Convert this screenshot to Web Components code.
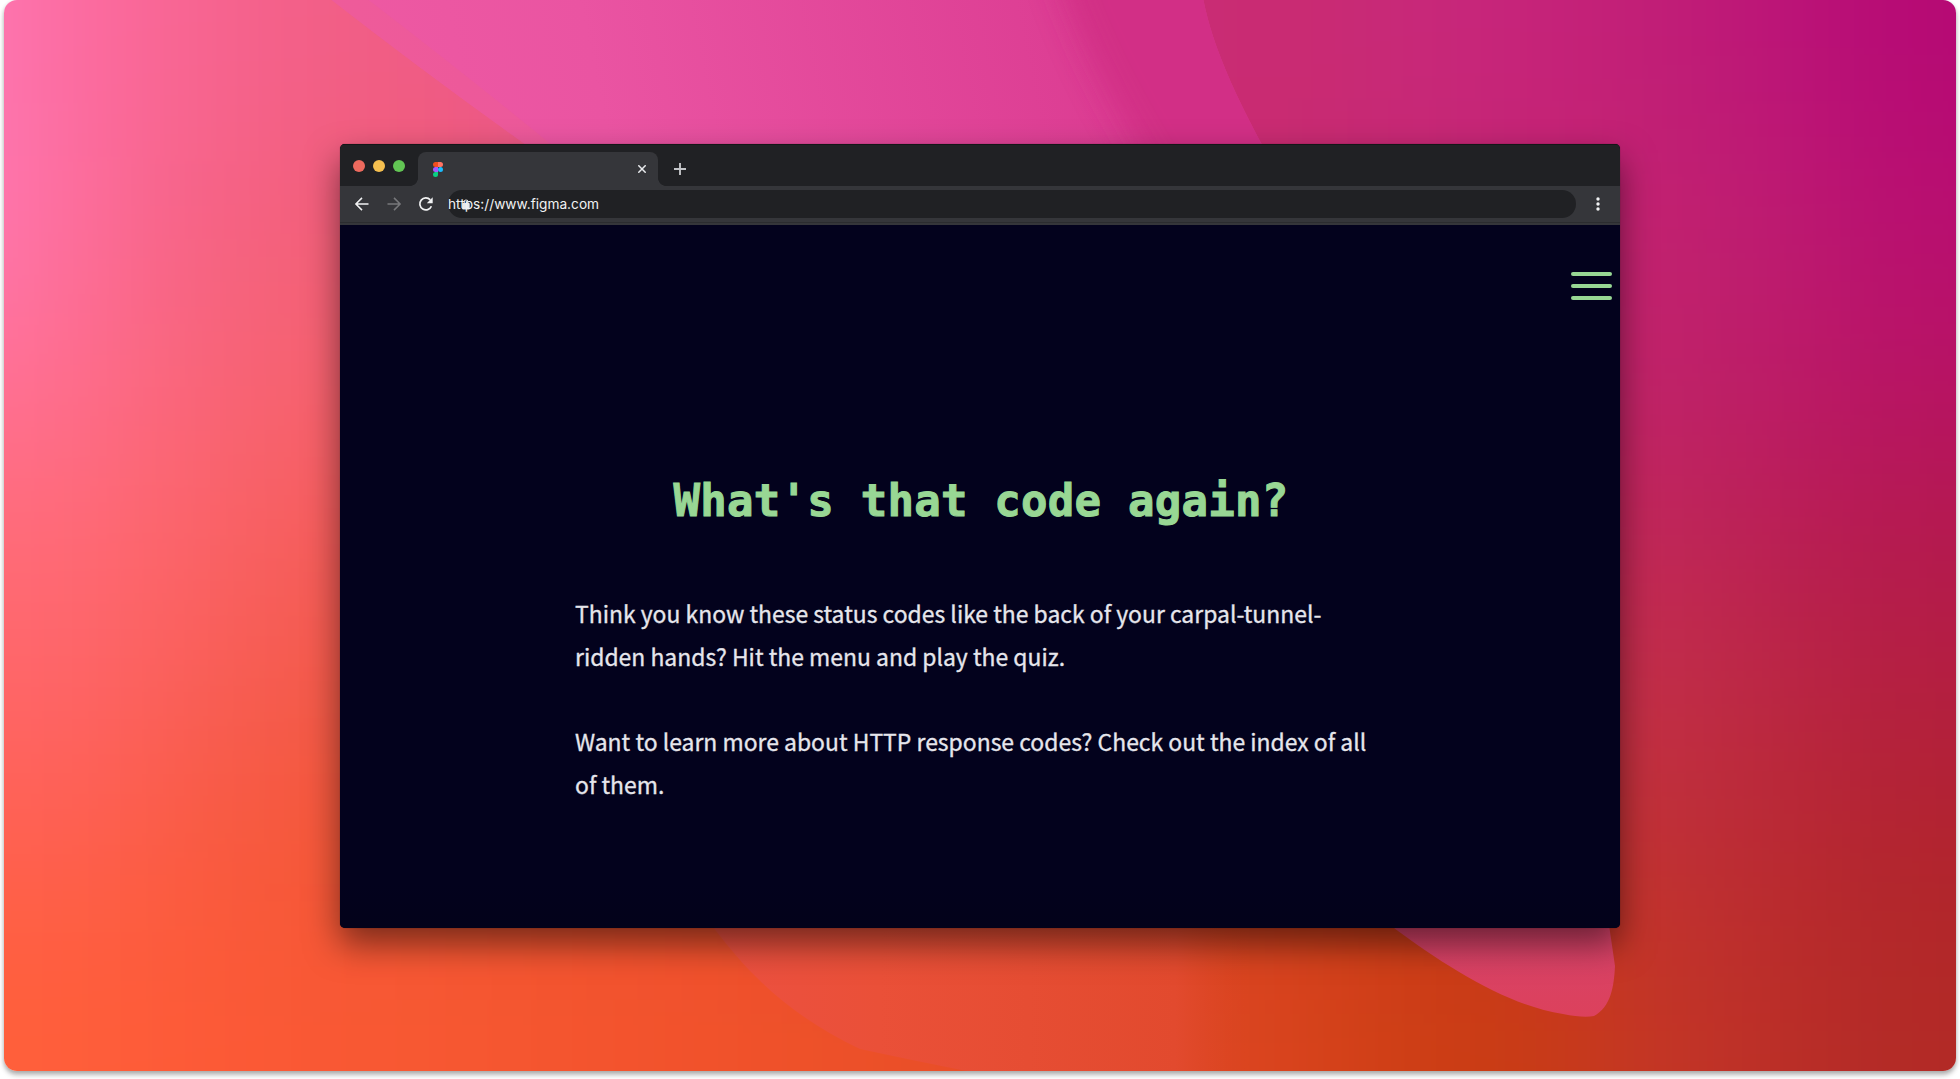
<!DOCTYPE html>
<html lang="en">
<head>
<meta charset="utf-8">
<title>What's that code again?</title>
<style>
html,body{margin:0;background:#fff;height:1079px;overflow:hidden}
</style>
</head>
<body>
<desktop-stage>
  <browser-window url="https://www.figma.com">
    <quiz-landing>
      <span slot="title">What's that code again?</span>
      <p>Think you know these status codes like the back of your carpal-tunnel-<br>ridden hands? Hit the menu and play the quiz.</p>
      <p>Want to learn more about HTTP response codes? Check out the index of all<br>of them.</p>
    </quiz-landing>
  </browser-window>
</desktop-stage>
<script>
const define = (name, html, setup) => customElements.define(name, class extends HTMLElement {
  connectedCallback() {
    if (this.shadowRoot) return;
    const t = document.createElement('template');
    t.innerHTML = html;
    this.attachShadow({mode: 'open'}).append(t.content.cloneNode(true));
    if (setup) setup(this, this.shadowRoot);
  }
});

/* Wallpaper: a softly blended colour grid with translucent petals over it. */
const mesh = [
 'fc6ca3 f86592 f25f87 f05c85 ea5590 e65090 e04a90 d84088 d03880 c82c76 c92b70 c8297a c6237a c11f76 bc1578 b60a74',
 'fe6f9f f66385 f2607a f05a70 e85a80 e05080 d84080 d04080 c82c70 c82c70 c82a70 c52770 c42470 c2226f be1c70 b90f70',
 'ff6e90 f9657a f76270 f06068 e85860 e05060 d84060 d04060 c82c60 c82c60 c82a60 c52760 c42468 bf2369 bc1b68 b71364',
 'ff6b78 fc6468 f65d5d f05850 e85050 e05050 d84050 d04050 c82c50 c82c50 c82a50 c52750 c42455 c02858 ba1f54 b41a4e',
 'ff6568 fa5e58 f35a4a f05840 e85040 e05040 d84040 d04040 c82c40 c82c40 c82a40 c52740 c4304a c32f48 bb2743 b41f40',
 'ff6050 fa5b42 f45738 f25535 f05230 ee5030 e84c30 e04828 da4424 d84422 d04020 c83a18 c63528 bf3038 b92932 b1242e',
 'ff5f3a fd5a37 f95834 f75832 f4552f f2522c ee5129 ea4f28 e54c28 df4824 d9431d cd3e15 c83b14 c43626 bb2e28 b22a26'
].map(r => r.split(' '));

define('mesh-wallpaper', `
<style>:host{display:block;width:100%;height:100%}svg{display:block}</style>
<svg width="1952" height="1071" viewBox="4 0 1952 1071">
  <defs>
    <filter id="soft" x="-20%" y="-20%" width="140%" height="140%" color-interpolation-filters="sRGB"><feGaussianBlur stdDeviation="66 80"/></filter>
    <filter id="edge" x="-30%" y="-30%" width="160%" height="160%"><feGaussianBlur stdDeviation="16"/></filter>
    <linearGradient id="band" gradientUnits="userSpaceOnUse" x1="340" y1="150" x2="1080" y2="0">
      <stop offset="0" stop-color="#ee5aa2"/><stop offset=".35" stop-color="#ea54a2"/><stop offset="1" stop-color="#dc3d93"/>
    </linearGradient>
    <linearGradient id="low" gradientUnits="userSpaceOnUse" x1="720" y1="0" x2="1250" y2="0">
      <stop offset="0" stop-color="#ec5040"/><stop offset=".3" stop-color="#ea5038"/><stop offset=".86" stop-color="#e24a2e"/><stop offset="1" stop-color="#da4422" stop-opacity="0"/>
    </linearGradient>
    <linearGradient id="petal" gradientUnits="userSpaceOnUse" x1="0" y1="928" x2="0" y2="1016">
      <stop offset="0" stop-color="#d7426a"/><stop offset="1" stop-color="#dc415c"/>
    </linearGradient>
  </defs>
  <g id="cells" filter="url(#soft)"></g>
  <path d="M329-2 Q425 73 533 150 L1265 150 C1235 95 1212 45 1203-2Z" fill="url(#band)"/>
  <path d="M329-2 Q425 73 533 150 L558 150 Q460 70 366-2Z" fill="#f2627f" opacity=".22"/>
  <clipPath id="top"><path d="M327-2 L530 150 L1265 150 C1235 95 1212 45 1203-2Z"/></clipPath>
  <g clip-path="url(#top)"><path d="M1052-40 Q1085 70 1170 200 L1330 200 V-40Z" fill="#cd2c80" opacity=".7" filter="url(#edge)"/></g>
  <path d="M708 920 C755 985 800 1020 860 1049 Q920 1062 992 1076 L1260 1076 V920Z" fill="url(#low)"/>
  <path d="M1390 925 C1450 970 1510 1006 1563 1014 Q1583 1018 1594 1016 C1611 1007 1614 986 1615 966 L1609 925Z" fill="url(#petal)"/>
</svg>`, (host, root) => {
  const g = root.getElementById('cells'), W = 122.5, H = 154;
  for (let r = -1; r <= 7; r++) for (let c = -1; c <= 16; c++) {
    const e = document.createElementNS('http://www.w3.org/2000/svg', 'rect');
    const col = (c < 0 && r < 2) ? 'ff7cb8' : (c < 0 && r < 3) ? 'ff7298' : mesh[Math.min(6, Math.max(0, r))][Math.min(15, Math.max(0, c))];
    e.setAttribute('x', c * W - (c < 0 ? 180 : 0)); e.setAttribute('y', r * H - (r < 0 ? 180 : 0));
    e.setAttribute('width', W + 1 + (c < 0 || c > 15 ? 180 : 0)); e.setAttribute('height', H + 1 + (r < 0 || r > 6 ? 180 : 0));
    e.setAttribute('fill', '#' + col);
    g.append(e);
  }
});

define('desktop-stage', `
<style>
:host{display:block;padding:0 4px;height:1079px;box-sizing:border-box}
.card{display:grid;width:1952px;height:1071px;border-radius:13px;box-shadow:0 4px 5px rgba(0,0,0,.27),0 1px 4px rgba(0,0,0,.12)}
.card>*{grid-area:1/1}
mesh-wallpaper{border-radius:13px;overflow:hidden}
.front{z-index:1;display:flex;justify-content:center;align-items:flex-start;padding-top:144px}
</style>
<div class="card"><mesh-wallpaper></mesh-wallpaper><div class="front"><slot></slot></div></div>`);

define('traffic-lights', `
<style>:host{display:flex;gap:8px}i{width:12px;height:12px;border-radius:50%}</style>
<i style="background:#ed6a5e"></i><i style="background:#f5bf4f"></i><i style="background:#62c554"></i>`);

define('browser-tab', `
<style>
:host{display:flex;align-items:flex-end}
.foot{width:8px;height:8px}
.l{background:radial-gradient(circle at 0 0,transparent 7.6px,#35363a 8.2px)}
.r{background:radial-gradient(circle at 100% 0,transparent 7.6px,#35363a 8.2px)}
.tab{box-sizing:border-box;width:240px;height:34px;background:#35363a;border-radius:8px 8px 0 0;display:flex;justify-content:space-between;align-items:center;padding:0 12px 0 15px}
svg{display:block}
</style>
<div class="foot l"></div>
<div class="tab">
  <svg width="10" height="15" viewBox="0 0 10 15"><path d="M2.5 0H5v5H2.5a2.5 2.5 0 0 1 0-5" fill="#f24e1e"/><path d="M5 0h2.5a2.5 2.5 0 0 1 0 5H5" fill="#ff7262"/><path d="M2.5 5H5v5H2.5a2.5 2.5 0 0 1 0-5" fill="#a259ff"/><circle cx="7.5" cy="7.5" r="2.5" fill="#1abcfe"/><path d="M2.5 10H5v2.5A2.5 2.5 0 1 1 2.5 10" fill="#0acf83"/></svg>
  <svg width="8" height="8" viewBox="0 0 8 8"><path d="M.3.3 7.7 7.7M7.7.3.3 7.7" stroke="#e8eaed" stroke-width="1.5"/></svg>
</div>
<div class="foot r"></div>`);

define('browser-toolbar', `
<style>
:host{display:flex;height:39px;box-sizing:border-box;background:linear-gradient(#35363a 36px,#2b2c2f 36px,#2b2c2f 37px,#35363a 37px);align-items:flex-start;padding:4px 14px 0}
.nav,.more{display:flex;height:28px;align-items:center}
.nav{gap:16px;width:94px}
.bar{width:1128px;height:28px;border-radius:14px;background:#202124;display:grid;align-items:center;color:#f1f2f3;font:13.7px/28px Inter,"Liberation Sans",sans-serif}
.bar>*{grid-area:1/1}
.lock{margin-left:14px}
.more{margin-left:20px}
svg{display:block}
</style>
<div class="nav">
 <svg width="16" height="16" viewBox="0 0 16 16" fill="none" stroke="#f1f2f3" stroke-width="1.5"><path d="M14.5 8H2.4M8 1.9 1.9 8 8 14.1"/></svg>
 <svg width="16" height="16" viewBox="0 0 16 16" fill="none" stroke="#77787b" stroke-width="1.5"><path d="M1.5 8H13.6M8 1.9 14.1 8 8 14.1"/></svg>
 <svg width="16" height="16" viewBox="0 0 16 16"><path d="M13.4 10.2A6 6 0 1 1 12.3 3.9" fill="none" stroke="#f1f2f3" stroke-width="1.7"/><path d="M14.7 1.3V7.2H8.8Z" fill="#f1f2f3"/></svg>
</div>
<div class="bar">
 <svg class="lock" width="8" height="11" viewBox="0 0 8 11"><rect x=".3" y="4" width="7.4" height="6.6" rx=".8" fill="#e8e9eb"/><path d="M2.2 4.5V2.8a1.8 1.8 0 0 1 3.600 0v1.700" fill="none" stroke="#e8e9eb" stroke-width="1.1"/></svg>
 <span id="url"></span>
</div>
<div class="more"><svg width="4" height="14" viewBox="0 0 4 14" fill="#f1f2f3"><circle cx="2" cy="2" r="1.7"/><circle cx="2" cy="7" r="1.7"/><circle cx="2" cy="12" r="1.7"/></svg></div>`,
(host, root) => { root.getElementById('url').textContent = host.getAttribute('url'); });

define('browser-window', `
<style>
:host{display:flex;flex-direction:column;width:1280px;height:784px;border-radius:5px;box-shadow:0 16px 34px rgba(0,0,0,.5),0 0 1px rgba(0,0,0,.6);background:#03021d;overflow:hidden}
.strip{height:42px;flex:none;background:#202124;box-shadow:inset 0 1px #151618;display:flex;align-items:flex-end}
traffic-lights{align-self:center;margin:2px 5px 0 13px}
.plus{display:block;margin:0 0 11px 8px}
</style>
<div class="strip"><traffic-lights></traffic-lights><browser-tab></browser-tab>
<svg class="plus" width="12" height="12" viewBox="0 0 12 12"><path d="M6 0V12M0 6H12" stroke="#c3c5c8" stroke-width="1.9"/></svg></div>
<browser-toolbar></browser-toolbar>
<slot></slot>`, (host, root) => {
  const old = root.querySelector('browser-toolbar');
  const bar = document.createElement('browser-toolbar');
  bar.setAttribute('url', host.getAttribute('url'));
  old.replaceWith(bar);
});

define('menu-button', `
<style>:host{display:flex;flex-direction:column;gap:8px;width:41px}i{height:4.2px;border-radius:2px;background:#98d794}</style><i></i><i></i><i></i>`);

define('quiz-landing', `
<style>
:host{display:flex;flex-direction:column;flex:1;background:linear-gradient(#03021d 660px,#03021a);color:#e6e6ec}
header{display:flex;justify-content:flex-end;padding:46.5px 8.5px 0 0}
h1{margin:171.4px 0 0 2px;text-align:center;color:#98d794;font:bold 44px/60px "DejaVu Sans Mono",monospace;letter-spacing:.24px;white-space:nowrap;-webkit-text-stroke:1px #98d794}
.copy{margin:61px 0 0 235px;display:flex;flex-direction:column;gap:42.6px;white-space:nowrap;font:22.93px/42.6px "Noto Sans CJK SC",sans-serif;-webkit-text-stroke:.3px #e6e6ec}
::slotted(p){margin:0}
</style>
<header><menu-button></menu-button></header>
<h1><slot name="title"></slot></h1>
<div class="copy"><slot></slot></div>`);
</script>
</body>
</html>
